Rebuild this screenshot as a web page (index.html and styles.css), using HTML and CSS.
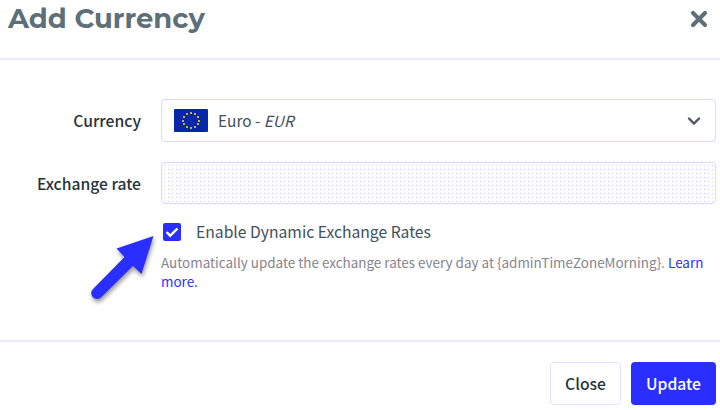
FILE: index.html
```html
<!DOCTYPE html>
<html lang="en">
  <head>
    <meta charset="UTF-8" />
    <meta name="viewport" content="width=device-width, initial-scale=1.0" />
    <title>Add Currency</title>
    <link rel="stylesheet" href="styles.css">
  </head>
  <body>
    <div class="modal">
      <header class="modal-header">
        <h1>Add Currency</h1>
        <button class="close-icon" type="button" aria-label="Close">
          <svg width="18" height="18" viewBox="0 0 18 18">
            <path d="M3 3l12 12M15 3L3 15" stroke="#5d6f78" stroke-width="4.2" stroke-linecap="round" />
          </svg>
        </button>
      </header>

      <main class="modal-body">
        <div class="row">
          <span class="label">Currency</span>
          <div class="select">
            <svg class="flag" width="34" height="23" viewBox="0 0 34 23">
              <rect width="34" height="23" rx="1" fill="#0628a8" />
              <g fill="#c8b32a">
                <rect x="16" y="3" width="2" height="2" />
                <rect x="20" y="4" width="2" height="2" />
                <rect x="23" y="7" width="2" height="2" />
                <rect x="24" y="11" width="2" height="2" />
                <rect x="23" y="14" width="2" height="2" />
                <rect x="20" y="17" width="2" height="2" />
                <rect x="16" y="18" width="2" height="2" />
                <rect x="12" y="17" width="2" height="2" />
                <rect x="9" y="14" width="2" height="2" />
                <rect x="8" y="11" width="2" height="2" />
                <rect x="9" y="7" width="2" height="2" />
                <rect x="12" y="4" width="2" height="2" />
              </g>
            </svg>
            <span class="value">Euro - <em>EUR</em></span>
            <svg class="chevron" width="14" height="10" viewBox="0 0 14 10">
              <path d="M2 2.500l5 5 5-5" fill="none" stroke="#4f5863" stroke-width="2.4" stroke-linecap="round" />
            </svg>
          </div>
        </div>

        <div class="row">
          <label class="label" for="rate">Exchange rate</label>
          <input class="rate" id="rate" type="text" disabled />
        </div>

        <div class="dynamic">
          <div class="check">
            <svg width="18" height="18" viewBox="0 0 18 18">
              <rect width="18" height="18" rx="2" fill="#2a2fff" />
              <path d="M3.500 9l3.700 3.700L14.500 5.500" fill="none" stroke="#fff" stroke-width="2.4" />
            </svg>
            <span>Enable Dynamic Exchange Rates</span>
          </div>
          <p class="help">
            Automatically update the exchange rates every day at {adminTimeZoneMorning}. <a href="#">Learn<br>more.</a>
          </p>
        </div>
      </main>

      <footer class="modal-footer">
        <button class="btn" type="button">Close</button>
        <button class="btn btn-primary" type="button">Update</button>
      </footer>

      <!-- pointer to the checkbox -->
      <svg class="arrow" width="80" height="80" viewBox="0 0 80 80">
        <path d="M69.500 6L32.500 18.500L40.500 27L9 59A5.700 5.700 0 0 0 17 67.500L49 36L57.500 44Z" fill="#2a2fff" />
      </svg>
    </div>
  </body>
</html>
```
FILE: styles.css
```css
* {
  margin: 0;
  padding: 0;
  box-sizing: border-box;
}
body {
  background: #fff;
  color: #26343b;
  font-family: "Noto Sans CJK SC", "Noto Sans", sans-serif;
  overflow: hidden;
}
.modal {
  position: relative;
  height: 410px;
}
.modal-header {
  display: flex;
  justify-content: space-between;
  height: 60px;
  padding: 0 12px 0 8px;
  border-bottom: 2px solid #ebeaff;
}
h1 {
  color: #5d6f78;
  font-family: Montserrat, Inter, sans-serif;
  font-size: 27.4px;
  font-weight: 700;
  line-height: 37px;
  white-space: nowrap;
}
.close-icon {
  height: 18px;
  margin-top: 10px;
  border: 0;
  background: none;
}
.modal-body {
  height: 280px;
  padding: 39px 4px 0 0;
}
.row {
  display: flex;
  align-items: center;
  height: 43px;
  margin-bottom: 20px;
}
.label {
  width: 141px;
  margin-right: 20px;
  font-size: 15.7px;
  font-weight: 500;
  line-height: 23px;
  text-align: right;
  white-space: nowrap;
}
.select {
  display: flex;
  flex: 1;
  align-items: center;
  height: 43px;
  padding: 0 14px 0 12px;
  border: 1px solid #d9d8ff;
  border-radius: 4px;
}
.value {
  margin: -2px 0 0 10px;
  color: #41505b;
  font-size: 15.4px;
}
.chevron {
  margin-left: auto;
}
.rate {
  flex: 1;
  height: 42px;
  margin-top: -1px;
  border: 1px solid #d9d8ff;
  border-radius: 4px;
  background: conic-gradient(from 270deg at 1px 1px, #d0ceff 90deg, #fff 0) 2px 2px / 4px 4px;
}
.dynamic {
  margin: -3px 0 0 161px;
}
.check {
  display: flex;
  align-items: center;
  height: 20px;
  padding-left: 2px;
  color: #41505b;
  font-size: 15.7px;
  white-space: nowrap;
}
.check span {
  margin: -1px 0 0 15px;
}
.help {
  margin-top: 11px;
  color: #85848f;
  font-size: 13.45px;
  line-height: 19px;
  white-space: nowrap;
}
.help a {
  color: #2a2fff;
  text-decoration: none;
}
.modal-footer {
  display: flex;
  justify-content: flex-end;
  gap: 10px;
  padding: 20px 4px 0 0;
  border-top: 2px solid #ebeaff;
}
.btn {
  width: 71px;
  height: 43px;
  padding-bottom: 1px;
  border: 1px solid #e2e1ff;
  border-radius: 4px;
  background: #fff;
  color: #26343b;
  font-family: inherit;
  font-size: 15.7px;
  font-weight: 500;
}
.btn-primary {
  width: 85px;
  border: 0;
  background: #2a2fff;
  color: #fff;
}
.arrow {
  position: absolute;
  left: 84px;
  top: 230px;
  filter: drop-shadow(1px 3px 2px rgba(0, 0, 0, 0.4));
}
```
